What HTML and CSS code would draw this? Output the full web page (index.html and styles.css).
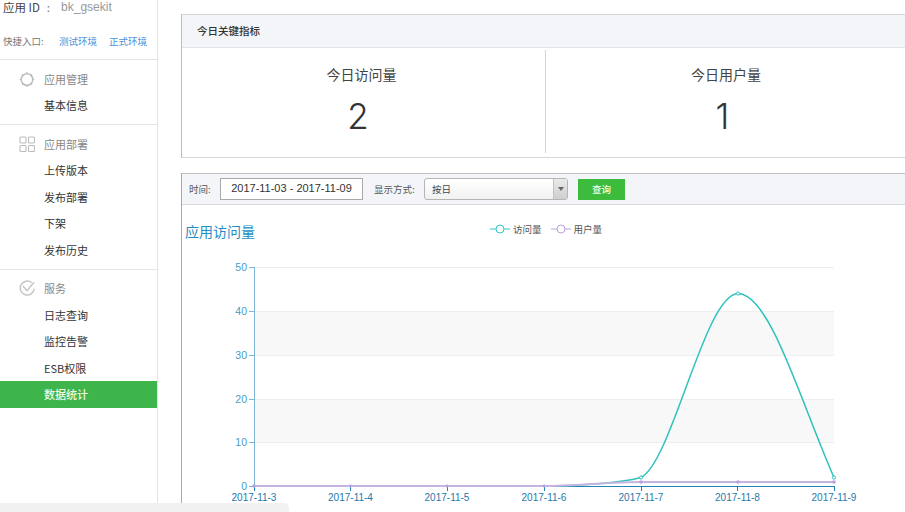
FILE: index.html
```html
<!DOCTYPE html>
<html lang="zh">
<head>
<meta charset="utf-8">
<title>数据统计</title>
<link rel="stylesheet" href="styles.css">
</head>
<body>
<div class="page">
  <aside class="sidebar">
    <div class="app-id"><span class="app-label">应用 ID</span><span class="app-colon">:</span><span class="app-value">bk_gsekit</span></div>
    <div class="quick"><span class="quick-label">快捷入口:</span><a class="quick-link">测试环境</a><a class="quick-link">正式环境</a></div>
    <section class="group">
      <div class="group-head">
        <svg class="icon" viewBox="0 0 16 16"><circle cx="8" cy="8.5" r="5.8" fill="none" stroke="#bdbdbd" stroke-width="1.5"/><path d="M8 1v2M8 14v2M.8 8.5h2M13.2 8.5h2M2.9 3.4l1.4 1.4M11.7 12.2l1.4 1.4M2.9 13.6l1.4-1.4M11.7 4.8l1.4-1.4" stroke="#bdbdbd" stroke-width="1.2"/></svg>
        <span>应用管理</span>
      </div>
      <a class="item">基本信息</a>
    </section>
    <section class="group">
      <div class="group-head">
        <svg class="icon" viewBox="0 0 16 16"><g fill="none" stroke="#bdbdbd" stroke-width="1.1"><rect x="1" y="1" width="6" height="6" rx="1"/><rect x="9.5" y="1" width="6" height="6" rx="1"/><rect x="1" y="9.5" width="6" height="6" rx="1"/><rect x="9.5" y="9.5" width="6" height="6" rx="1"/></g></svg>
        <span>应用部署</span>
      </div>
      <a class="item">上传版本</a>
      <a class="item">发布部署</a>
      <a class="item">下架</a>
      <a class="item">发布历史</a>
    </section>
    <section class="group group-last">
      <div class="group-head">
        <svg class="icon" viewBox="0 0 16 16"><path d="M12.6 2.6A7 7 0 1 0 15.2 8.6" fill="none" stroke="#c4c4c4" stroke-width="1.4"/><path d="M4 6l4 4.6L15 2.2" fill="none" stroke="#c4c4c4" stroke-width="1.4"/></svg>
        <span>服务</span>
      </div>
      <a class="item">日志查询</a>
      <a class="item">监控告警</a>
      <a class="item">ESB权限</a>
      <a class="item active">数据统计</a>
    </section>
  </aside>
  <main class="content">
    <section class="panel kpi">
      <h2 class="panel-title">今日关键指标</h2>
      <div class="stats">
        <div class="stat stat-first"><div class="stat-label">今日访问量</div><div class="stat-value">2</div></div>
        <div class="stat"><div class="stat-label">今日用户量</div><div class="stat-value">1</div></div>
      </div>
    </section>
    <section class="panel report">
      <div class="filters">
        <span class="filter-label">时间:</span>
        <div class="date-input">2017-11-03 - 2017-11-09</div>
        <span class="filter-label mode-label">显示方式:</span>
        <div class="select"><span class="select-text">按日</span><span class="select-arrow"><i class="caret"></i></span></div>
        <button class="query">查询</button>
      </div>
      <div class="chart-head">
        <h3 class="chart-title">应用访问量</h3>
        <div class="legend">
          <span class="legend-item"><svg class="legend-mark" viewBox="0 0 20 10"><path d="M0 5h20" stroke="#2ec7c9" stroke-width="1"/><circle cx="10" cy="5" r="4" fill="#fff" stroke="#2ec7c9"/></svg>访问量</span>
          <span class="legend-item"><svg class="legend-mark" viewBox="0 0 20 10"><path d="M0 5h20" stroke="#b6a2de" stroke-width="1"/><circle cx="10" cy="5" r="4" fill="#fff" stroke="#b6a2de"/></svg>用户量</span>
        </div>
      </div>
      <svg class="chart" width="723" height="262" viewBox="182 246 723 262">
        <rect x="254" y="311" width="580" height="44" fill="#f8f8f8"/>
        <rect x="254" y="399" width="580" height="44" fill="#f8f8f8"/>
        <g stroke="#eee" stroke-width="1">
          <path d="M254 267.5H834M254 311.5H834M254 355.5H834M254 399.5H834M254 442.5H834"/>
        </g>
        <g stroke="#7db6d6" stroke-width="1" fill="none">
          <path d="M254.5 267V486M249 267.5h5M249 311.5h5M249 355.5h5M249 399.5h5M249 442.5h5M249 486.5h5"/>
        </g>
        <g stroke="#1f86b4" stroke-width="1" fill="none">
          <path d="M254 486.5H834.5M254.5 486v5M350.5 486v5M447.5 486v5M544.5 486v5M641.5 486v5M737.5 486v5M834.5 486v5"/>
        </g>
        <g class="y-labels">
          <text x="247" y="271">50</text>
          <text x="247" y="315">40</text>
          <text x="247" y="359">30</text>
          <text x="247" y="403">20</text>
          <text x="247" y="446">10</text>
          <text x="247" y="490">0</text>
        </g>
        <g class="x-labels">
          <text x="254" y="501">2017-11-3</text>
          <text x="350.5" y="501">2017-11-4</text>
          <text x="447" y="501">2017-11-5</text>
          <text x="544" y="501">2017-11-6</text>
          <text x="641" y="501">2017-11-7</text>
          <text x="737.5" y="501">2017-11-8</text>
          <text x="834" y="501">2017-11-9</text>
        </g>
        <path d="M254 486H544C580 486 620 483 641 477.5C672 462 705 294 738 293.5C770 294 800 400 834 477.5" fill="none" stroke="#2ec2bd" stroke-width="1.5"/>
        <path d="M254 486H544C575 486 610 482 641 482H834" fill="none" stroke="#c5b4e0" stroke-width="2"/>
        <g fill="#fff" stroke="#2ec2bd" stroke-width="1">
          <circle cx="641" cy="477.5" r="1.6"/><circle cx="738" cy="293.5" r="1.6"/><circle cx="834" cy="477.5" r="1.6"/>
        </g>
        <g fill="#b6a2de">
          <circle cx="254" cy="486" r="1.8"/><circle cx="350.5" cy="486" r="1.4"/><circle cx="447" cy="486" r="1.4"/><circle cx="544" cy="486" r="1.4"/><circle cx="641" cy="482" r="1.8"/><circle cx="738" cy="482" r="1.8"/><circle cx="834" cy="482" r="1.8"/>
        </g>
      </svg>
    </section>
  </main>
  <div class="scrollbar"></div>
</div>
</body>
</html>
```

FILE: styles.css
```css
* { box-sizing: border-box; }
html, body { margin: 0; padding: 0; height: 100%; overflow: hidden; background: #fff; }
body { font-family: "Noto Sans CJK SC", "Liberation Sans", sans-serif; color: #333; }
.page { position: relative; display: flex; width: 905px; height: 512px; overflow: hidden; }

.sidebar { flex: 0 0 158px; min-width: 0; height: 512px; border-right: 1px solid #e2e2e2; font-size: 11px; }
.app-id { display: flex; align-items: center; height: 14px; padding-left: 3px; font-size: 11.5px; line-height: 14px; color: #444; }
.app-colon { margin: 0 11px 0 7px; color: #777; }
.app-value { font-family: "Liberation Sans", sans-serif; color: #999; font-size: 12px; }
.quick { display: flex; align-items: center; height: 46px; padding: 9px 0 0 3px; border-bottom: 1px solid #e4e4e4; font-size: 9.5px; color: #777; }
.quick-label { width: 56px; flex: none; }
.quick-link { flex: 0 0 50px; color: #4a90d9; }

.group { padding: 5.5px 0 5.5px; border-bottom: 1px solid #e6e6e6; }
.group-last { border-bottom: 0; }
.group-head { display: flex; align-items: center; height: 26.5px; padding-left: 19px; color: #888; }
.icon { width: 16px; height: 16px; margin-right: 9px; flex: none; }
.item { display: block; height: 26.5px; line-height: 26.5px; padding-left: 44px; color: #333; }
.item.active { background: #3eb54a; color: #f2fbe9; font-weight: 500; }

.content { flex: 1; min-width: 0; padding: 14px 0 0 23px; }
.panel { border: 1px solid #d8d8d8; border-right: 0; width: 730px; background: #fff; }
.kpi { height: 144px; border-left-color: #bbb; }
.panel-title { margin: 0; height: 33px; padding-left: 15px; background: #f3f5f8; border-bottom: 1px solid #e2e4e8; font-size: 10.5px; font-weight: 500; line-height: 32px; color: #333; }
.stats { display: flex; padding-top: 2px; }
.stat { flex: 0 0 364px; height: 103px; text-align: center; }
.stat-first { border-right: 1px solid #d4d4d4; }
.stat-label { padding: 14px 4px 0 0; font-size: 14px; line-height: 20px; color: #444; }
.stat-value { margin-top: 9px; padding-right: 11px; font-family: "Inter", "Liberation Sans", sans-serif; font-weight: 300; font-size: 35px; line-height: 46px; color: #333; }

.report { margin-top: 15px; height: 340px; border-left-color: #aaa; border-bottom: 0; border-top-color: #c0c0c0; }
.filters { display: flex; align-items: center; height: 31px; padding-left: 7px; background: #f3f5f8; border-bottom: 1px solid #d8d8d8; font-size: 9.5px; color: #555; }
.filter-label { width: 31px; flex: none; }
.date-input { flex: none; width: 143px; height: 22px; border: 1px solid #a9a9a9; background: #fff; font-size: 11px; line-height: 19px; text-align: center; color: #333; font-family: "Liberation Sans", sans-serif; }
.mode-label { width: 50px; margin-left: 11px; }
.select { display: flex; flex: none; width: 144px; height: 22px; border: 1px solid #b5b5b5; border-radius: 3px; background: linear-gradient(#fff, #f2f2f2); }
.select-text { flex: 1; padding-left: 7px; font-size: 9.5px; line-height: 21px; color: #444; }
.select-arrow { display: flex; align-items: center; justify-content: center; width: 14px; background: linear-gradient(#e9e9e9, #cfcfcf); border-left: 1px solid #c2c2c2; }
.caret { width: 0; height: 0; border: 3px solid transparent; border-top: 4px solid #666; border-bottom: 0; }
.query { flex: none; width: 47px; height: 21px; margin-left: 10px; padding: 0; border: 0; background: #3cbb3c; color: #eefbe8; font: 500 9.5px "Noto Sans CJK SC", sans-serif; }

.chart-head { position: relative; height: 41px; }
.chart-title { margin: 0; padding: 16px 0 0 3px; font-size: 14px; font-weight: 400; line-height: 20px; color: #1f8fc4; }
.legend { display: flex; gap: 9px; position: absolute; left: 308px; top: 17px; font-size: 9.5px; color: #555; line-height: 14px; }
.legend-item { display: flex; align-items: center; }
.legend-mark { width: 20px; height: 10px; margin-right: 3px; }

.chart { display: block; }
.y-labels text { font: 10.5px "Liberation Sans", sans-serif; fill: #4a9cc4; text-anchor: end; }
.x-labels text { font: 500 10px "Liberation Sans", sans-serif; fill: #1f78a8; text-anchor: middle; }

.scrollbar { position: absolute; left: 0; bottom: 0; width: 289px; height: 9px; background: #f1f1f1; border-radius: 0 5px 0 0; }
```
